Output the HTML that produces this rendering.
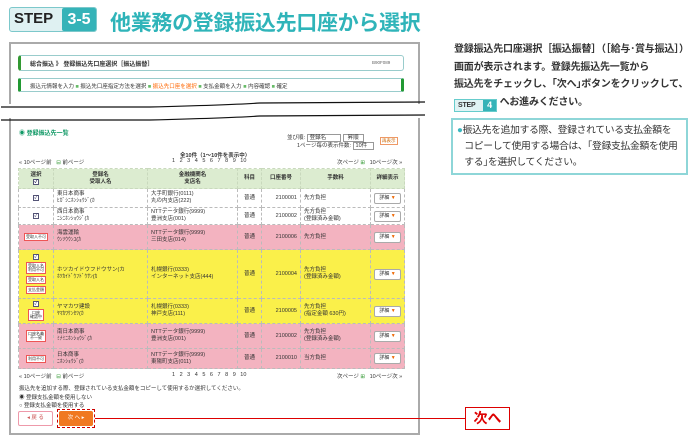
<!DOCTYPE html>
<html><head><meta charset="utf-8"><style>
*{margin:0;padding:0;box-sizing:border-box}
body{width:689px;height:438px;background:#fff;position:relative;overflow:hidden;font-family:"Liberation Sans","Noto Sans CJK JP",sans-serif;color:#333}
.a{position:absolute}
.t{font-size:5.5px;white-space:nowrap;color:#333}
.b{font-weight:bold}
table{border-collapse:collapse;position:absolute;left:18px;top:168px;width:387px;font-size:5.5px}
td{border:1px dashed #bbb;padding:0 3px;vertical-align:middle;line-height:7px}
tr.h td{background:#dcecd0;font-weight:bold;text-align:center;border-color:#c9d9bd}
tr.w td{background:#fff}tr.p td{background:#f3b3c0}tr.y td{background:#faf04a}
.det{display:inline-block;border:1px solid #aaa;background:#fff;border-radius:2px;padding:1px 4px;font-size:5px}
.det b{color:#e60}
.lbl{display:inline-block;border:1px solid #e55;background:#fff;font-size:4px;line-height:4px;padding:1px;margin:1px 0}
.cb{display:inline-block;width:6px;height:6px;border:1px solid #557;background:#fff;font-size:5px;line-height:4px;color:#225}
</style></head><body>
<div class="a" style="left:9px;top:7px;width:88px;height:25px;border:1px solid #7cc8cb;border-radius:3px;background:#dff1f2"></div>
<div class="a b" style="left:14px;top:10px;font-size:15px;color:#222;letter-spacing:0">STEP</div>
<div class="a b" style="left:62px;top:8px;width:34px;height:23px;background:#35b3b8;border-radius:2px;color:#fff;font-size:16px;text-align:center;line-height:23px">3-5</div>
<div class="a b" style="left:110px;top:7px;font-size:21px;color:#2fb4b9;white-space:nowrap;letter-spacing:-0.3px">他業務の登録振込先口座から選択</div>
<div class="a" style="left:9px;top:42px;width:411px;height:62px;border:2px solid #aaa;border-bottom:none"></div>
<div class="a" style="left:9px;top:118px;width:411px;height:317px;border:2px solid #aaa;border-top:none"></div>
<svg class="a" style="left:0;top:98px" width="430" height="26"><path d="M1 9 L150 9 Q230 7 260 5 L425 4" stroke="#111" stroke-width="1.2" fill="none"/><path d="M1 22 L150 22 Q230 20 260 18 L425 17" stroke="#111" stroke-width="1.2" fill="none"/></svg>
<div class="a" style="left:18px;top:55px;width:386px;height:16px;border:1px solid #9cc;border-radius:3px;border-left:3px solid #393"></div>
<div class="a t b" style="left:30px;top:59px;font-size:6px">総合振込 》 登録振込先口座選択［振込振替］</div>
<div class="a t" style="left:372px;top:60px;font-size:4.5px;color:#666">B90F089</div>
<div class="a" style="left:18px;top:78px;width:386px;height:14px;border:1px solid #9cc;border-left:3px solid #293;border-right:3px solid #293;border-radius:2px"></div>
<div class="a t" style="left:30px;top:82px">振込元情報を入力 <span style="color:#6b6">■</span> 振込先口座指定方法を選択 <span style="color:#6b6">■</span> <span style="color:#f60">振込先口座を選択</span> <span style="color:#6b6">■</span> 支払金額を入力 <span style="color:#6b6">■</span> 内容確認 <span style="color:#6b6">■</span> 確定</div>
<div class="a t b" style="left:19px;top:128px;color:#196;font-size:6px">◉ 登録振込先一覧</div>
<div class="a t" style="left:287px;top:133px">並び順: <span style="border:1px solid #999;padding:0 14px 0 2px">登録名</span> <span style="border:1px solid #999;padding:0 4px">昇順</span></div>
<div class="a t" style="left:297px;top:141px">1ページ毎の表示件数: <span style="border:1px solid #999;padding:0 6px 0 2px">10件</span></div>
<div class="a t" style="left:380px;top:137px;border:1px solid #e96;color:#c60;padding:0 1px;font-size:4.5px">再表示</div>
<div class="a t b" style="left:180px;top:151px">全10件（1〜10件を表示中）</div>
<div class="a t" style="left:19px;top:158px">« 10ページ前 &nbsp; <span style="color:#393">⊟</span> 前ページ</div>
<div class="a t" style="left:172px;top:158px;word-spacing:3px">1 2 3 4 5 6 7 8 9 10</div>
<div class="a t" style="left:337px;top:158px">次ページ <span style="color:#393">⊞</span> &nbsp; 10ページ次 »</div>
<table>
<tr class="h" style="height:20px"><td style="width:35px">選択<br><span class="cb">✓</span></td><td style="width:94px">登録名<br>受取人名</td><td style="width:90px">金融機関名<br>支店名</td><td style="width:24px">科目</td><td style="width:39px">口座番号</td><td style="width:70px">手数料</td><td>詳細表示</td></tr>
<tr class="w" style="height:19px"><td align="center"><span class="cb">✓</span></td><td>東日本商事<br>ﾋｶﾞｼﾆﾎﾝｼｮｳｼﾞ(ｶ</td><td>大手町銀行(0111)<br>丸の内支店(222)</td><td align="center">普通</td><td align="right">2100001</td><td>先方負担</td><td align="center"><span class="det">詳細 <b>▼</b></span></td></tr>
<tr class="w" style="height:17px"><td align="center"><span class="cb">✓</span></td><td>西日本商事<br>ﾆｼﾆﾎﾝｼｮｳｼﾞ(ｶ</td><td>NTTデータ銀行(9999)<br>豊洲支店(001)</td><td align="center">普通</td><td align="right">2100002</td><td>先方負担<br>(登録済み金額)</td><td align="center"><span class="det">詳細 <b>▼</b></span></td></tr>
<tr class="p" style="height:25px"><td align="center"><span class="lbl">受取人不可</span></td><td>海雲運輸<br>ｳﾝｿｳｳﾝﾕ(ｶ</td><td>NTTデータ銀行(9999)<br>三田支店(014)</td><td align="center">普通</td><td align="right">2100006</td><td>先方負担</td><td align="center"><span class="det">詳細 <b>▼</b></span></td></tr>
<tr class="y" style="height:49px"><td align="center"><span class="cb">✓</span><br><span class="lbl">受取人名<br>利用不可</span><br><span class="lbl">受取人名</span><br><span class="lbl">支払金額</span></td><td>ホツカイドウフドウサン(カ<br>ﾎﾂｶｲﾄﾞｳﾌﾄﾞｳｻﾝ(ｶ</td><td>札幌銀行(0333)<br>インターネット支店(444)</td><td align="center">普通</td><td align="right">2100004</td><td>先方負担<br>(登録済み金額)</td><td align="center"><span class="det">詳細 <b>▼</b></span></td></tr>
<tr class="y" style="height:25px"><td align="center"><span class="cb">✓</span><br><span class="lbl">口座<br>確認中</span></td><td>ヤマカワ建設<br>ﾔﾏｶﾜｹﾝｾﾂ(ｶ</td><td>札幌銀行(0333)<br>神戸支店(111)</td><td align="center">普通</td><td align="right">2100005</td><td>先方負担<br>(指定金額 630円)</td><td align="center"><span class="det">詳細 <b>▼</b></span></td></tr>
<tr class="p" style="height:25px"><td align="center"><span class="lbl">口座名義<br>不一致</span></td><td>南日本商事<br>ﾐﾅﾐﾆﾎﾝｼｮｳｼﾞ(ｶ</td><td>NTTデータ銀行(9999)<br>豊洲支店(001)</td><td align="center">普通</td><td align="right">2100002</td><td>先方負担<br>(登録済み金額)</td><td align="center"><span class="det">詳細 <b>▼</b></span></td></tr>
<tr class="p" style="height:20px"><td align="center"><span class="lbl">利用不可</span></td><td>日本商事<br>ﾆﾎﾝｼｮｳｼﾞ(ｶ</td><td>NTTデータ銀行(9999)<br>東陽町支店(011)</td><td align="center">普通</td><td align="right">2100010</td><td>当方負担</td><td align="center"><span class="det">詳細 <b>▼</b></span></td></tr>
</table>
<div class="a t" style="left:19px;top:372px">« 10ページ前 &nbsp; <span style="color:#393">⊟</span> 前ページ</div>
<div class="a t" style="left:172px;top:372px;word-spacing:3px">1 2 3 4 5 6 7 8 9 10</div>
<div class="a t" style="left:337px;top:372px">次ページ <span style="color:#393">⊞</span> &nbsp; 10ページ次 »</div>
<div class="a t" style="left:19px;top:384px">振込先を追加する際、登録されている支払金額をコピーして使用するか選択してください。</div>
<div class="a t" style="left:19px;top:393px">◉ 登録支払金額を使用しない</div>
<div class="a t" style="left:19px;top:401px">○ 登録支払金額を使用する</div>
<div class="a t" style="left:18px;top:411px;width:35px;height:15px;border:1px solid #e9a;border-radius:2px;background:#fff;text-align:center;line-height:13px;color:#c55">◂ 戻 る</div>
<div class="a t" style="left:57px;top:409px;width:38px;height:19px;border:1px dashed #c00;padding:1px"><div style="background:#f07820;height:15px;border-radius:2px;color:#fff;text-align:center;line-height:15px">次 へ ▸</div></div>
<div class="a" style="left:95px;top:418px;width:370px;height:1px;background:#d00"></div>
<div class="a b" style="left:465px;top:407px;width:45px;height:23px;border:1px solid #d00;color:#d00;font-size:14px;text-align:center;line-height:21px">次へ</div>
<div class="a b" style="left:454px;top:41px;font-size:10px;line-height:17.5px;color:#333;white-space:nowrap;letter-spacing:-0.2px">登録振込先口座選択［振込振替］（［給与･賞与振込］）<br>画面が表示されます。登録先振込先一覧から<br>振込先をチェックし、｢次へ｣ボタンをクリックして、<br><span style="display:inline-block;width:43px;height:13px;border:1px solid #6cc;background:#e0f3f4;vertical-align:-2px;position:relative;font-size:7px;line-height:12px;padding-left:3px">STEP<span style="position:absolute;right:0;top:0;width:13px;height:11px;background:#35b3b8;color:#fff;text-align:center;font-size:9px;line-height:11px">4</span></span> へお進みください。</div>
<div class="a" style="left:451px;top:118px;width:237px;height:57px;border:2px solid #8ed6d8"></div>
<div class="a" style="left:457px;top:123px;font-size:9.8px;line-height:16px;color:#333;white-space:nowrap;letter-spacing:-0.3px"><span style="color:#3bb7c0">●</span>振込先を追加する際、登録されている支払金額を<br>&nbsp;&nbsp;&nbsp;コピーして使用する場合は、｢登録支払金額を使用<br>&nbsp;&nbsp;&nbsp;する｣を選択してください。</div>
</body></html>
